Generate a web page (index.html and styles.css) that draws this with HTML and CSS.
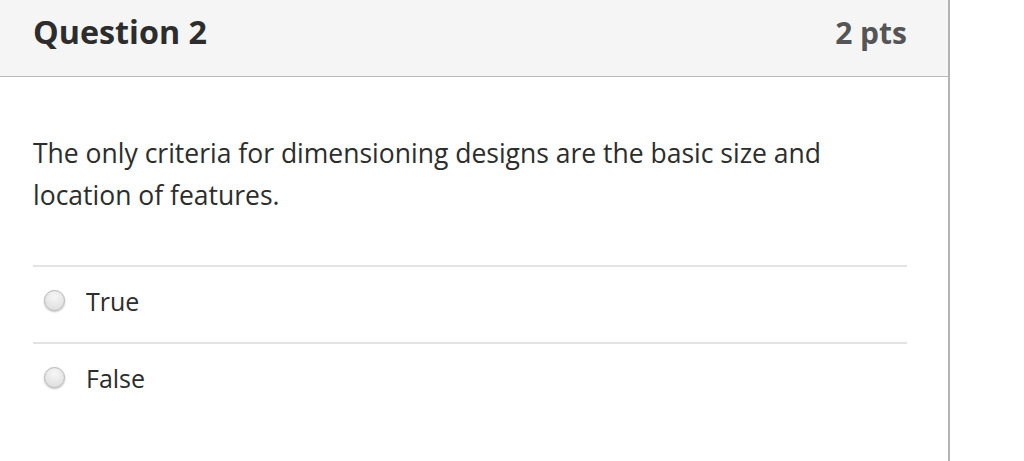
FILE: index.html
```html
<!DOCTYPE html>
<html>
<head>
<meta charset="utf-8">
<link rel="stylesheet" href="styles.css">
</head>
<body>
<div class="page">
  <div class="card">
    <div class="header">
      <div class="title">Question 2</div>
      <div class="pts">2 pts</div>
    </div>
    <div class="body">
      <p class="question">The only criteria for dimensioning designs are the basic size and location of features.</p>
      <div class="answers">
        <div class="answer"><span class="radio"></span><span class="label">True</span></div>
        <div class="answer"><span class="radio"></span><span class="label">False</span></div>
      </div>
    </div>
  </div>
</div>
</body>
</html>
```
FILE: styles.css
```css
html, body {
  margin: 0;
  padding: 0;
  background: #ffffff;
}
body {
  font-family: "Open Sans", "Liberation Sans", sans-serif;
  color: #2d2d2d;
}
.page {
  width: 1024px;
  height: 461px;
  overflow: hidden;
}
.card {
  width: 950px;
  height: 461px;
  border-right: 2px solid #b3b3b3;
  box-sizing: border-box;
}
.header {
  height: 77px;
  background: #f5f5f5;
  border-bottom: 1px solid #b9b9b9;
  box-sizing: border-box;
  display: flex;
  justify-content: space-between;
  align-items: flex-start;
  padding: 9px 41px 0 33px;
}
.title {
  font-size: 32.3px;
  line-height: 44px;
  font-weight: 700;
  color: #2d2d2d;
}
.pts {
  font-size: 30px;
  line-height: 41px;
  font-weight: 700;
  color: #555555;
  padding-top: 3px;
}
.body {
  padding: 0 41px 0 33px;
}
.question {
  margin: 0;
  padding-top: 55px;
  font-size: 26.5px;
  line-height: 42px;
  color: #2d2d2d;
  max-width: 850px;
}
.answers {
  margin-top: 49px;
}
.answer {
  box-sizing: border-box;
  border-top: 2px solid #e3e3e3;
  height: 77px;
  padding: 0 0 8px 11px;
  display: flex;
  align-items: center;
  gap: 21px;
}
.radio {
  width: 19px;
  height: 19px;
  border-radius: 50%;
  border: 1px solid #b5b5b5;
  background: radial-gradient(circle at 50% 30%, #f6f6f6, #dadada);
  box-shadow: 0 1px 2px rgba(0,0,0,0.25);
}
.label {
  font-size: 25px;
  line-height: 34px;
  color: #2d2d2d;
}
```
